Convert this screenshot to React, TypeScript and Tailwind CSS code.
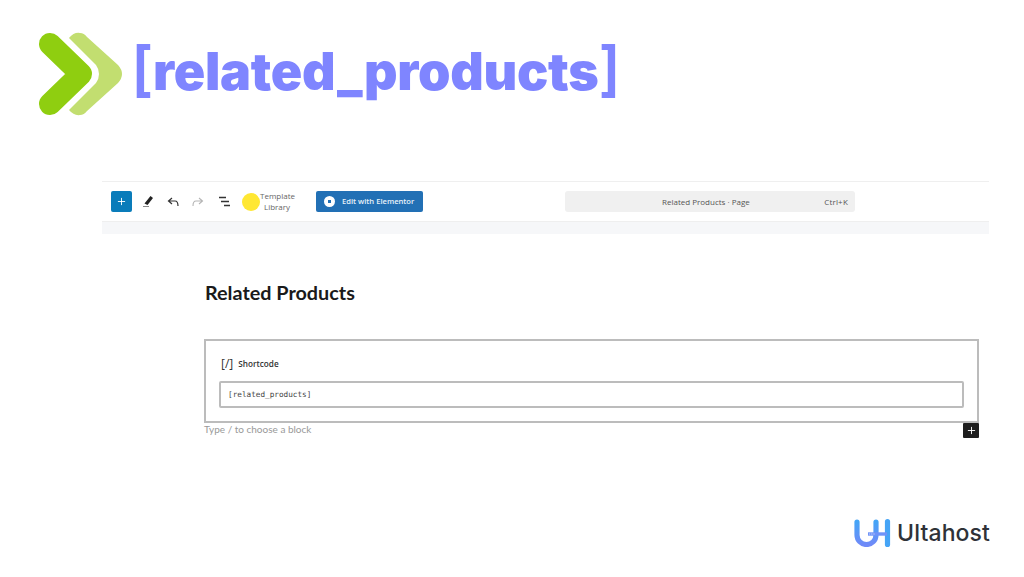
import React from 'react';
import { Plus } from 'lucide-react';

function ChevronLogo() {
  return (
    <svg width="86" height="86" viewBox="0 0 86 86" fill="none" className="shrink-0">
      <path
        d="M31 6 Q36 0 42 1 Q46 1 49 5 L80 33 Q84 37.5 84 42 Q84 46.5 80 51 L49 79 Q46 83 42 83 Q36 84 31 78 L58 51 Q61 47 61 42 Q61 37 58 33 Z"
        fill="#c2de70"
      />
      <path d="M12 12 L43 42 L12 72" stroke="#8fce10" strokeWidth="22" strokeLinecap="round" strokeLinejoin="round" />
    </svg>
  );
}

function ToolbarIcons() {
  return (
    <div className="flex items-center">
      <button className="flex h-[21px] w-[21px] items-center justify-center rounded-[2px] bg-[#0a7cba] text-white">
        <Plus size={11} strokeWidth={2} />
      </button>
      <svg width="12" height="13" viewBox="0 0 12 13" className="ml-[10px]">
        <path d="M2.5 8.5 L8.5 1 L11 3 L5.5 10 Z" fill="#222" />
        <path d="M1 11.5 H7" stroke="#888" strokeWidth="1" />
      </svg>
      <svg width="12" height="10" viewBox="0 0 12 10" fill="none" className="ml-[13px]">
        <path d="M5 1 L1.5 4 L5 7 M2 4 H8 Q11 4 11 9" stroke="#333" strokeWidth="1.2" />
      </svg>
      <svg width="12" height="10" viewBox="0 0 12 10" fill="none" className="ml-[13px]">
        <path d="M7 1 L10.5 4 L7 7 M10 4 H4 Q1 4 1 9" stroke="#b5b5b5" strokeWidth="1.1" />
      </svg>
      <svg width="13" height="11" viewBox="0 0 13 11" className="ml-[14px]">
        <path d="M1 1.5 H8 M3 5.5 H11 M6 9.5 H12" stroke="#333" strokeWidth="1.3" />
      </svg>
      <div className="ml-[11px] h-[18px] w-[18px] rounded-full bg-[#ffe733]" />
      <div className="w-[34px] text-center font-['Open_Sans',sans-serif] text-[8px] leading-[10.5px] text-[#666]">Template Library</div>
    </div>
  );
}

function UltahostLogo() {
  return (
    <div className="flex items-center">
      <svg width="37" height="28" viewBox="0 0 37 28" fill="none">
        <defs>
          <linearGradient id="uh" x1="0" y1="0" x2="0" y2="1">
            <stop offset="0" stopColor="#45a4f6" />
            <stop offset="1" stopColor="#6f8af8" />
          </linearGradient>
        </defs>
        <path d="M3 3 V16 A9.5 9.5 0 0 0 22 16 V3" stroke="url(#uh)" strokeWidth="5.2" strokeLinecap="round" />
        <path d="M33.5 2.6 V25.4" stroke="#45a4f6" strokeWidth="5.2" strokeLinecap="round" />
        <path d="M14 15 H33" stroke="#6f93f8" strokeWidth="3.4" />
        <path d="M15 15 H21" stroke="#c9d4fc" strokeWidth="1" strokeDasharray="1.2 1" />
      </svg>
      <span className="ml-[6px] text-[23px] font-medium leading-none tracking-[0.1px] text-[#2f3238]">Ultahost</span>
    </div>
  );
}

export default function App() {
  return (
    <div className="flex h-[577px] w-[1024px] flex-col overflow-hidden bg-white font-['Inter',sans-serif]">
      {/* Title */}
      <div className="box-content flex h-[86px] items-start pl-[38px] pt-[32px]">
        <ChevronLogo />
        <h1 className="ml-[7px] flex items-baseline text-[52px] font-black leading-[73px] tracking-[-0.3px] text-[#7f85ff]">
          <span className="text-[60px] font-semibold leading-[73px]">[</span>
          related_products
          <span className="text-[60px] font-semibold leading-[73px]">]</span>
        </h1>
      </div>

      {/* Editor toolbar */}
      <div className="ml-[102px] mt-[63px] w-[887px] font-['Open_Sans',sans-serif]">
        <div className="flex h-[41px] items-center border-y border-[#efefef] pl-[9px]">
          <ToolbarIcons />
          <button className="ml-[22px] flex h-[21px] w-[107px] items-center rounded-[2px] bg-[#2270b5] pl-[8px] text-[7.6px] font-semibold text-[#e8f1f9]">
            <span className="mr-[7px] flex h-[11px] w-[11px] items-center justify-center rounded-full bg-white">
              <span className="h-[3px] w-[3px] bg-[#2270b5]" />
            </span>
            Edit with Elementor
          </button>
          <div className="ml-[142px] flex h-[21px] w-[290px] items-center rounded-[3px] bg-[#f0f0f0] pr-[7px] text-[8px] leading-[12px] text-[#555]">
            <span className="flex-1 pl-[97px]">Related Products · Page</span>
            <span className="tracking-[0.2px]">Ctrl+K</span>
          </div>
        </div>
        <div className="h-[12px] bg-[#f6f7f9]" />
      </div>

      {/* Page body */}
      <div className="ml-[204px] mt-[46px] w-[775px]">
        <h2 className="pl-[1px] font-['Lato',sans-serif] text-[19.8px] font-bold leading-[24px] text-[#1a1a1a]">Related Products</h2>
        <div className="mt-[35px] h-[84px] border-2 border-[#bcbcbc] px-[13px] pt-[15px]">
          <div className="ml-[2px] flex h-[16px] items-center text-[#333]">
            <span className="font-['Open_Sans',sans-serif] text-[12px]">[/]</span>
            <span className="ml-[5px] font-['Open_Sans',sans-serif] text-[8.2px] font-semibold">Shortcode</span>
          </div>
          <div className="mt-[9px] flex h-[27px] items-center rounded-[2px] border-2 border-[#bcbcbc] pl-[7px] font-['DejaVu_Sans_Mono',monospace] text-[7.7px] text-[#444]">
            [related_products]
          </div>
        </div>
        <div className="flex h-[16px] justify-between">
          <span className="font-['Lato',sans-serif] text-[10px] leading-[13px] text-[#999]">Type / to choose a block</span>
          <span className="flex h-[15px] w-[16px] items-center justify-center rounded-[1px] bg-[#1e1e1e] text-white">
            <Plus size={11} strokeWidth={2} />
          </span>
        </div>
      </div>

      {/* Brand */}
      <div className="mr-[34px] mt-[80px] flex justify-end">
        <UltahostLogo />
      </div>
    </div>
  );
}
